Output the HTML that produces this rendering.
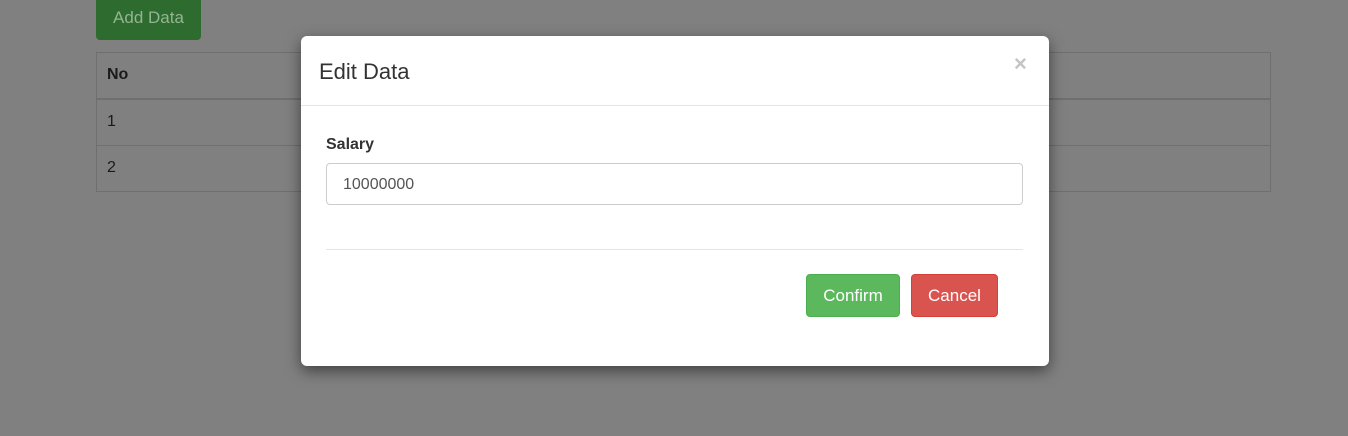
<!DOCTYPE html>
<html><head><style>
*{box-sizing:border-box;margin:0;padding:0}
body{width:1348px;height:436px;background:#808080;font-family:"Liberation Sans",sans-serif;position:relative;overflow:hidden;color:#333}
.a{position:absolute}
</style></head><body>
<div class="a" style="left:96px;top:-4px;width:105px;height:44px;background:#2e6b2e;border-radius:4px;color:#94b494;font-size:17px;line-height:44px;text-align:center">Add Data</div>
<div class="a" style="left:96px;top:52px;width:1175px;height:140px;border:1px solid #6f6f6f"></div>
<div class="a" style="left:96px;top:98px;width:1175px;height:2px;background:#6f6f6f"></div>
<div class="a" style="left:96px;top:145px;width:1175px;height:1px;background:#6f6f6f"></div>
<div class="a" style="left:107px;top:66px;font-size:16px;font-weight:bold;color:#1a1a1a">No</div>
<div class="a" style="left:107px;top:113px;font-size:16px;color:#1a1a1a">1</div>
<div class="a" style="left:107px;top:159px;font-size:16px;color:#1a1a1a">2</div>
<div class="a" style="left:301px;top:36px;width:748px;height:330px;background:#fff;border-radius:6px;box-shadow:0 5px 15px rgba(0,0,0,.5)">
 <div class="a" style="left:18px;top:23px;font-size:22px;color:#333">Edit Data</div>
 <div class="a" style="left:713px;top:15px;font-size:22px;font-weight:bold;color:#c4c4c4">×</div>
 <div class="a" style="left:0;top:69px;width:748px;height:1px;background:#e5e5e5"></div>
 <div class="a" style="left:25px;top:100px;font-size:16px;font-weight:bold;color:#333">Salary</div>
 <div class="a" style="left:25px;top:127px;width:697px;height:42px;border:1px solid #ccc;border-radius:4px;font-size:16px;line-height:41px;padding-left:16px;color:#555">10000000</div>
 <div class="a" style="left:25px;top:213px;width:697px;height:1px;background:#e5e5e5"></div>
 <div class="a" style="left:505px;top:238px;width:94px;height:43px;background:#5cb85c;border:1px solid #4cae4c;border-radius:4px;color:#fff;font-size:17px;line-height:41px;text-align:center">Confirm</div>
 <div class="a" style="left:610px;top:238px;width:87px;height:43px;background:#d9534f;border:1px solid #d43f3a;border-radius:4px;color:#fff;font-size:17px;line-height:41px;text-align:center">Cancel</div>
</div>
</body></html>
